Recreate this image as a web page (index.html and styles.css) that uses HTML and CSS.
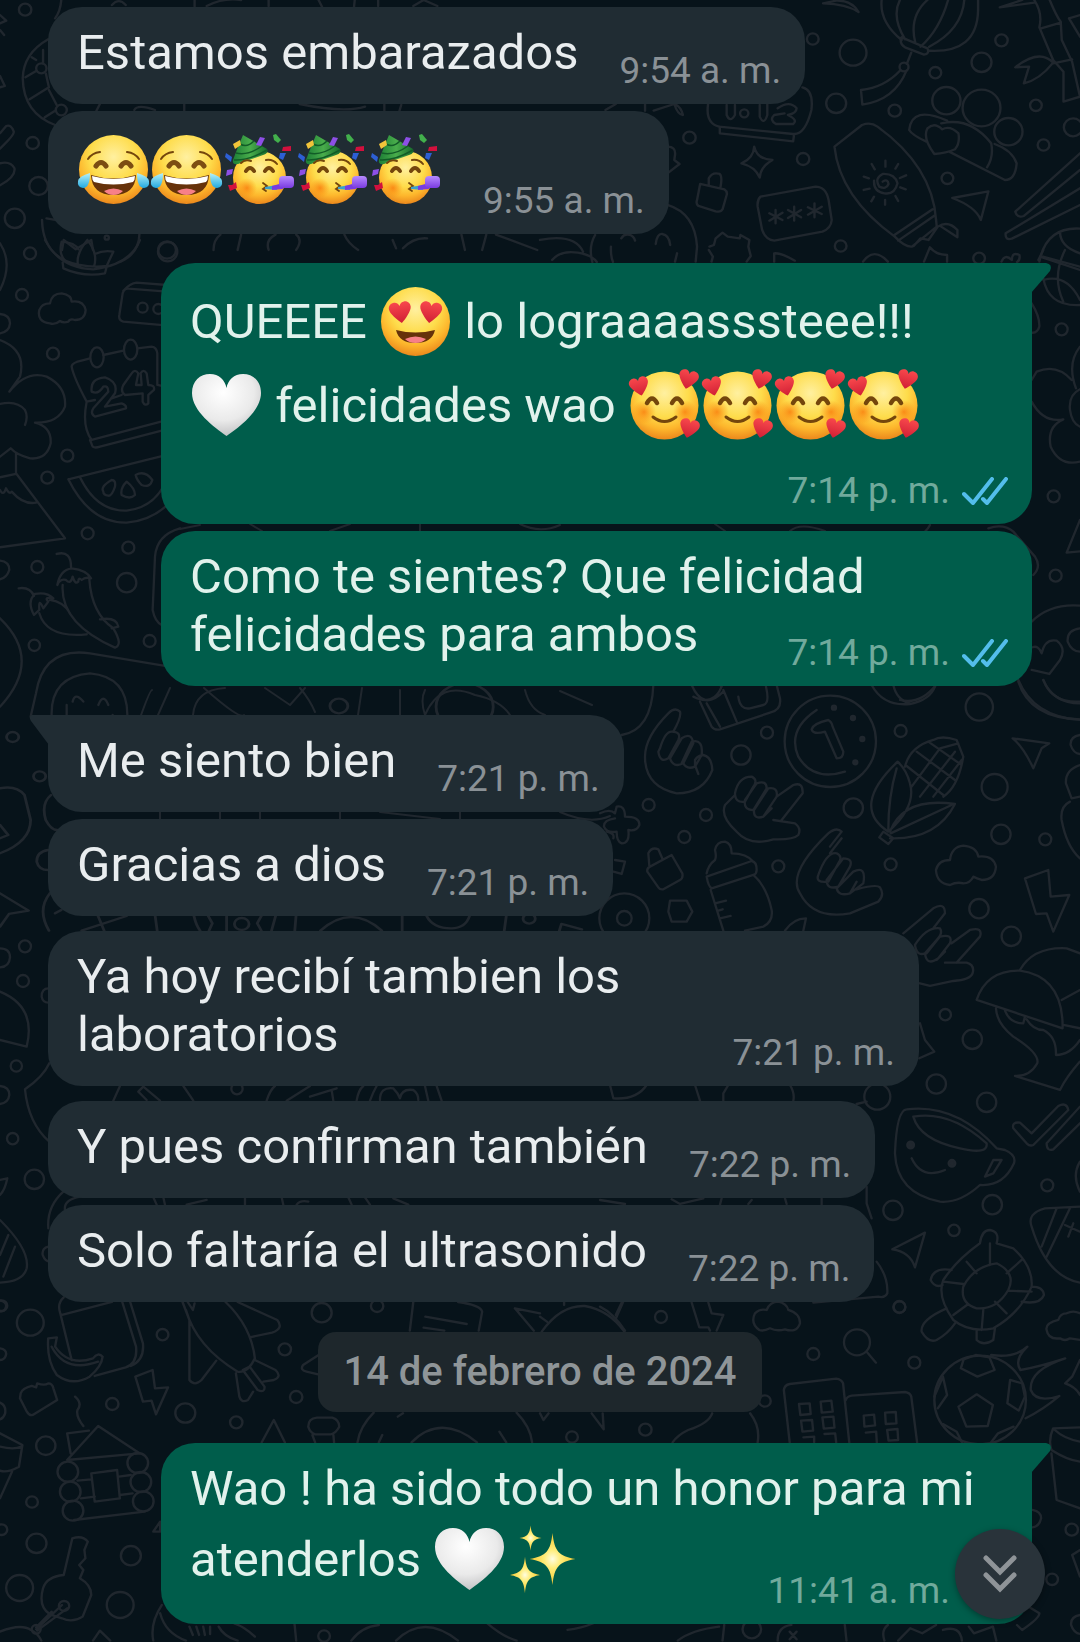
FILE: index.html
```html
<!DOCTYPE html>
<html lang="es">
<head>
<meta charset="utf-8">
<meta name="viewport" content="width=device-width, initial-scale=1">
<title>Chat</title>
<link rel="stylesheet" href="styles.css">
</head>
<body>
<svg class="defs" width="0" height="0" aria-hidden="true">
  <defs>
    <radialGradient id="face" cx=".5" cy=".32" r=".7">
      <stop offset="0" stop-color="#fff0a0"/><stop offset=".5" stop-color="#fedc4b"/><stop offset=".75" stop-color="#fdb62c"/><stop offset="1" stop-color="#e9821a"/>
    </radialGradient>
    <radialGradient id="blush"><stop offset="0" stop-color="#f9760a" stop-opacity=".75"/><stop offset="1" stop-color="#f98a10" stop-opacity="0"/></radialGradient>
    <radialGradient id="pearl" cx=".45" cy=".3" r=".75"><stop offset="0" stop-color="#fff"/><stop offset=".6" stop-color="#eaeaea"/><stop offset="1" stop-color="#bcbcbe"/></radialGradient>
    <linearGradient id="drop" x1="0" y1="0" x2="0" y2="1"><stop offset="0" stop-color="#b8f2f8"/><stop offset="1" stop-color="#22a9e0"/></linearGradient>
    <linearGradient id="hat" x1="0" y1="0" x2="1" y2="0"><stop offset="0" stop-color="#1d7f36"/><stop offset=".5" stop-color="#49ad4b"/><stop offset="1" stop-color="#176b2c"/></linearGradient>
    <linearGradient id="horn" x1="0" y1="0" x2="0" y2="1"><stop offset="0" stop-color="#b78bff"/><stop offset="1" stop-color="#7a3be0"/></linearGradient>
    <radialGradient id="gold"><stop offset="0" stop-color="#fffde0"/><stop offset=".35" stop-color="#ffed7a"/><stop offset="1" stop-color="#f5c62c"/></radialGradient>
    <linearGradient id="ruby" x1="0" y1="0" x2="0" y2="1"><stop offset="0" stop-color="#f8484c"/><stop offset="1" stop-color="#d01f35"/></linearGradient>
    <path id="heart" d="M0 10C-4 7-11-1-11-5C-11-9-8-11-5-11C-3-11-1-10 0-7C1-10 3-11 5-11C8-11 11-9 11-5C11-1 4 7 0 10Z" fill="url(#ruby)"/>
    <path id="star" d="M0-26C2-8 6-3 23 0C6 3 2 8 0 26C-2 8-6 3-23 0C-6-3-2-8 0-26Z" fill="url(#gold)"/>
    <symbol id="joy" viewBox="0 0 73 73">
      <circle cx="36.500" cy="36.500" r="34.500" fill="url(#face)"/>
      <g fill="none" stroke="#74460c" stroke-linecap="round">
        <path stroke-width="2" d="M11 26Q15 20 23 19M62 26Q58 20 50 19"/>
        <path stroke-width="5" stroke="#7c4d12" d="M19 33Q24 26 29 33M44 33Q49 26 54 33"/>
      </g>
      <path d="M14 42Q36.500 49 59 42Q58 62 36.500 62Q15 62 14 42Z" fill="#66320a"/>
      <path d="M15 43Q36.500 49 58 43Q58 47 56 49Q36.500 54 17 49Q15 47 15 43Z" fill="#fff"/>
      <path d="M27 58Q36.500 53 46 58Q42 62 36.500 62Q31 62 27 58Z" fill="#f78088"/>
      <path d="M13 40Q13 55 6 55Q0 54 1 48Q2 43 13 40Z" fill="url(#drop)"/>
      <path d="M60 40Q60 55 67 55Q73 54 72 48Q71 43 60 40Z" fill="url(#drop)"/>
    </symbol>
    <symbol id="party" viewBox="0 0 73 73">
      <circle cx="36.500" cy="44.500" r="26.500" fill="url(#face)"/>
      <circle cx="24" cy="55" r="10" fill="url(#blush)"/>
      <path d="M20 2L44 16Q46 20 40 22L15 31Q9 32 10 27Q14 16 20 2Z" fill="url(#hat)"/>
      <path d="M17 11Q24 15 31 8M13 20Q25 23 39 13M11 27Q25 28 44 17" fill="none" stroke="#125c27" stroke-width="1.500"/>
      <g fill="none" stroke="#74460c" stroke-linecap="round">
        <path stroke-width="2" d="M18 30Q22 26 28 28M43 27Q50 26 54 31"/>
        <path stroke-width="4" d="M23 38Q27 32 31 38M42 38Q46 32 50 38"/>
        <path stroke-width="1.800" d="M40 50L44 53L40 56L43 58"/>
      </g>
      <path d="M42 54L54 52L54 57L42 56Z" fill="#3aa1cf"/>
      <path d="M49 53L60 50V56L49 57Z" fill="#7a3be0"/>
      <rect x="56" y="43" width="15" height="12" rx="4" fill="url(#horn)"/>
      <path d="M37 4l5 1-4 8-5-1z" fill="#8d4fe6"/><path d="M50 2l3-1 5 6-3 3-4-3z" fill="#42b04c"/>
      <path d="M60 14l8-1 0 5-9 0z" fill="#d2103d"/><path d="M57 20l6 0-3 7-4-2z" fill="#2d5fd4"/>
      <path d="M3 20l6 4-1 5-6-5z" fill="#2d5fd4"/><path d="M10 11l7-4 1 5-6 4z" fill="#f2c43a"/>
      <path d="M4 37l6-1-1 5-6 2z" fill="#8d4fe6"/><path d="M5 52l4 0 4-3 1 6-7 3z" fill="#d2103d"/>
    </symbol>
    <symbol id="love-eyes" viewBox="0 0 73 73">
      <circle cx="36.500" cy="36.500" r="34.500" fill="url(#face)"/>
      <use href="#heart" transform="translate(21.500 28) rotate(-8)"/>
      <use href="#heart" transform="translate(51.500 28) rotate(8)"/>
      <path d="M17 45Q36.500 50 56 45Q53 58 36.500 58Q20 58 17 45Z" fill="#66320a"/>
      <path d="M26 54Q36.500 49 47 54Q43 58 36.500 58Q30 58 26 54Z" fill="#f78088"/>
    </symbol>
    <symbol id="adore" viewBox="0 0 73 73">
      <circle cx="36.500" cy="36.500" r="34" fill="url(#face)"/>
      <circle cx="16" cy="43" r="12" fill="url(#blush)"/><circle cx="57" cy="43" r="12" fill="url(#blush)"/>
      <g fill="none" stroke="#74460c" stroke-linecap="round">
        <path stroke-width="4.500" d="M19 34Q24 25 29 34M44 34Q49 25 54 34"/>
        <path stroke-width="3" d="M25 48Q36.500 57 48 48"/>
      </g>
      <use href="#heart" transform="translate(11.500 18) rotate(-14) scale(.88)"/>
      <use href="#heart" transform="translate(60 11) rotate(14) scale(.9)"/>
      <use href="#heart" transform="translate(61 60) rotate(14) scale(.9)"/>
    </symbol>
    <symbol id="white-heart" viewBox="0 0 73 73">
      <path d="M36.500 67C24 58 2 42 2 24C2 12 10 5 20 5C29 5 35 11 36.500 19C38 11 44 5 53 5C63 5 71 12 71 24C71 42 49 58 36.500 67Z" fill="url(#pearl)"/>
    </symbol>
    <symbol id="sparkles" viewBox="0 0 73 73">
      <use href="#star" transform="translate(46.500 36)"/>
      <use href="#star" transform="translate(24.500 15) scale(.48)"/>
      <use href="#star" transform="translate(19 52) scale(.65 .7)"/>
    </symbol>
    <symbol id="read" viewBox="0 0 46 28">
      <path d="M2 17L11 26L30 2M21 22L25 26L44 2" fill="none" stroke="#53bdeb" stroke-width="4" stroke-linecap="round" stroke-linejoin="round"/>
    </symbol>
  </defs>
</svg>

<main class="chat">
  <svg class="wallpaper" viewBox="0 0 1080 1642" preserveAspectRatio="xMidYMin slice" aria-hidden="true">
    <!-- top left -->
    <g transform="scale(.3444 .3333)">
      <path d="M0 45L18 62L0 70M0 90L12 105M0 228L14 258L0 262M178 0Q175 35 160 55M140 118Q68 160 66 235Q68 340 160 375M125 150V190M106 212L74 232M133 220L142 262L86 298M142 270L165 316M160 332L130 352M105 180L92 172M0 400L18 378Q32 372 40 395Q42 405 0 446M0 490Q30 482 42 505Q46 530 0 556M565 0V20M600 18Q650 -8 700 0M780 0V18M325 15Q345 -8 365 15M925 0L935 20M1030 0L1028 20M1098 0V18M1200 18L1230 0L1270 18M390 330Q400 312 450 330M535 312V332M870 312Q1000 340 1060 320M1116 312V332M290 312L280 332M1165 315L1160 332"/>
      <path d="M122 660Q124 750 190 782M405 700Q405 760 350 785M135 655L160 660M180 750L185 720L220 748L265 720L270 750M620 750Q620 720 640 704M690 750L700 704M780 750Q770 720 800 704M860 750Q880 720 860 704M1000 704Q1010 730 1040 750M1140 720L1150 745M1170 745Q1200 712 1240 715M1340 704L1350 750M1400 750L1412 704M1440 704L1560 750"/>
      <circle cx="73" cy="29" r="18"/><circle cx="120" cy="205" r="15"/><circle cx="178" cy="330" r="16"/><circle cx="95" cy="429" r="18"/><circle cx="112" cy="558" r="27"/><circle cx="43" cy="655" r="29"/><circle cx="310" cy="713" r="6"/><circle cx="485" cy="750" r="26"/>
    </g>
    <!-- top right -->
    <g transform="translate(540 0) scale(.3444 .3333)">
      <path d="M1050 120Q985 65 992 0M1060 118Q1020 50 1045 0M1090 130Q1070 50 1125 0M1105 140Q1160 90 1185 0M1130 140Q1225 90 1232 0M1130 152Q1270 160 1272 30V0M1050 112L1125 145Q1132 162 1115 164L1060 142Q1042 130 1050 112ZM1078 158L1065 192M1045 212Q1000 262 932 270L936 314Q1030 300 1064 212M822 10L860 2Q905 0 925 36Q890 12 822 10M1335 22L1400 0M1335 22L1435 8M1435 0Q1460 40 1450 82L1490 180L1520 215V305L1568 290M1480 0Q1500 50 1512 65L1515 120L1545 185L1568 290M1455 85L1512 68M1490 190L1545 178M1490 188Q1450 145 1380 202L1420 200L1405 250Q1450 240 1490 188M1536 55L1568 45M1536 55L1568 110"/>
      <path d="M762 262Q795 270 788 330Q770 405 735 402L520 380Q480 370 488 312M522 380V400L735 424L738 402M542 315V345Q552 370 566 345V315M638 315V350Q650 378 660 345V312M690 325Q725 300 745 325Q745 340 720 345Q750 360 735 372H685Q665 360 680 345L710 340M330 332L390 312Q400 345 415 345Q410 322 392 312M190 330L220 312M305 312V332M370 440Q395 440 392 465L390 480L405 492L370 520M622 440Q630 478 675 480Q640 500 638 533Q625 500 585 490Q620 475 622 440ZM465 552L535 568Q545 575 542 585L530 628Q525 638 510 634L460 618Q452 612 456 600ZM490 555V535Q500 515 522 522Q530 530 524 562M640 590L800 560Q830 560 838 600L847 660Q845 685 820 695L680 722Q655 720 645 690L632 620Q630 600 640 590ZM684 630V670M666 640L704 660M704 638L666 662M738 620V662M720 630L758 652M758 630L720 654M797 610V652M778 622L818 642M818 620L778 644"/>
      <path d="M855 440L935 375Q960 365 980 380Q1140 500 1150 660L1152 680L1080 740Q1060 742 1030 710Q870 590 855 440ZM1028 706L1140 628M1040 722L1148 645M1085 738L1105 715L1128 720L1155 680M1155 680Q1185 660 1212 690L1212 712L1165 680M995 545Q1010 535 1012 552Q1005 570 985 560Q970 535 995 522Q1030 520 1038 550Q1030 585 1000 580Q968 575 970 542M1003 482V500M963 492L972 508M940 530L955 535M940 570L957 566M962 604L970 590M1002 600V614M1040 603L1032 588M1062 568L1046 562M1063 526L1045 534M1040 492L1032 506M1145 462Q1110 415 1125 385Q1145 365 1168 388Q1190 375 1215 400Q1220 430 1205 448Q1180 460 1145 462ZM1182 362Q1080 315 1072 390Q1080 405 1122 425M1165 370Q1250 350 1310 430Q1318 470 1298 502M1188 455L1350 540Q1380 540 1384 490Q1370 450 1320 432M1568 460L1380 635Q1385 655 1405 648L1568 510M1568 565L1352 700Q1350 722 1370 716L1568 615M1197 594L1302 574L1280 660Q1265 620 1197 594ZM370 615Q450 640 456 740L452 785M152 786Q140 740 160 705M206 740Q205 770 212 786M236 715Q245 700 260 705Q272 708 276 722M336 732Q340 700 355 702Q375 705 378 735M398 760L392 785M0 720Q100 700 125 755M35 780Q60 750 110 758Q150 765 165 786M492 740L505 735L510 715L530 698L545 710L580 715L582 705L608 720L605 740L612 768L600 785M490 750L502 770L498 785M680 785V760Q700 758 740 782M938 785Q970 740 1010 785M1115 785L1132 742Q1150 765 1182 765V785M1340 785Q1350 760 1370 780Q1370 755 1392 765Q1395 780 1385 786M1450 785Q1470 680 1568 686M1510 696Q1510 740 1568 760M1460 770L1568 800"/>
      <circle cx="792" cy="117" r="17"/><circle cx="909" cy="158" r="39"/><circle cx="1340" cy="121" r="18"/><circle cx="1282" cy="187" r="29"/><circle cx="1148" cy="218" r="17"/><circle cx="860" cy="310" r="29"/><circle cx="1030" cy="332" r="18"/><circle cx="1440" cy="316" r="17"/><circle cx="434" cy="413" r="18"/><circle cx="764" cy="477" r="18"/><circle cx="1462" cy="435" r="17"/><circle cx="1548" cy="382" r="27"/><circle cx="1183" cy="535" r="17"/><circle cx="873" cy="738" r="17"/><circle cx="1057" cy="201" r="13"/><circle cx="1275" cy="775" r="17"/><circle cx="593" cy="340" r="12"/><circle cx="1180" cy="302" r="41"/><circle cx="1282" cy="324" r="55"/><circle cx="1360" cy="395" r="41"/>
    </g>
    <!-- left, beside the outgoing messages -->
    <g transform="translate(0 240) scale(.3333)">
      <path d="M135 0Q180 85 280 88Q390 75 420 0M185 5Q225 8 235 28M185 5Q175 40 195 62M195 62Q250 85 320 78L340 35Q310 30 285 42M262 0Q225 45 235 78M262 0Q295 40 282 80M188 68L190 85Q250 112 315 100L320 80M0 10Q40 70 0 150M0 222Q30 225 30 250Q28 275 0 280M150 250Q110 245 118 210Q125 190 150 190Q155 160 185 160Q215 165 215 185Q250 180 257 210Q255 240 225 240Q210 235 205 245Q190 250 180 243Q165 255 150 250ZM540 260L370 245Q355 240 358 225L368 160Q372 145 385 146L540 158M370 152Q390 130 410 128L540 138M0 300Q80 330 60 410L28 455Q80 390 140 410Q200 440 195 500Q175 550 105 548Q155 560 152 610Q140 660 90 655Q50 645 32 625L0 650M0 492Q50 480 75 510Q85 530 75 555M48 640V700L195 895L0 922M0 712L48 702M0 750Q10 770 18 745Q28 765 35 755Q70 795 108 788M215 380Q215 372 230 366L270 355M310 345L370 332M412 325L455 320Q470 322 472 340V435L540 450M215 380Q220 410 260 485M260 485L285 480M335 475L365 465M260 485Q245 560 275 600L540 530M270 600L278 620Q285 625 300 620L540 558M275 455Q270 415 315 412Q355 425 345 460L315 500L365 490Q380 495 378 505L285 530Q270 520 280 505L325 455Q325 435 310 440Q295 465 275 455ZM395 400Q405 385 415 400L408 435H425L422 400Q430 385 440 400L445 435Q465 435 462 450L445 465V490Q435 500 428 485V460L375 465Q360 455 370 435ZM205 718L540 635M205 718Q270 850 380 848Q480 840 540 750M240 712Q290 815 380 812Q480 800 510 690M310 755Q300 740 335 720Q348 720 345 740Q335 770 325 767Q310 765 310 755ZM380 725Q360 745 365 765Q390 780 405 765Q405 745 380 725ZM407 705Q435 690 457 720Q450 745 425 735Q410 720 407 705ZM170 942Q215 930 213 985M172 1035Q180 990 215 985Q260 990 273 1015Q255 1010 245 1020Q235 1010 235 1025Q225 1035 218 1010Q212 1035 198 1020Q180 1015 172 1035ZM188 1035Q180 1150 345 1223Q370 1215 340 1165Q275 1120 268 1018M56 1045Q90 1040 102 1068M102 1125Q80 1085 105 1062Q140 1055 160 1075Q130 1070 145 1085L130 1105Q115 1070 118 1110ZM118 1120Q140 1195 260 1183M150 1080Q190 1085 210 1120M300 1138Q350 1130 355 1160L335 1165M0 962Q28 965 28 990Q20 1015 0 1018M0 1135Q130 1260 0 1400M540 865Q470 885 465 950L458 1110Q465 1145 485 1155M540 1285L270 1240Q130 1220 108 1360L92 1430M155 1430Q150 1310 270 1300Q385 1310 382 1430M218 1385Q225 1355 250 1385M295 1395Q310 1358 325 1395M200 1395V1430M338 1425V1430"/>
      <circle cx="90" cy="40" r="18"/><circle cx="503" cy="35" r="29"/><circle cx="66" cy="165" r="18"/><circle cx="159" cy="341" r="18"/><circle cx="428" cy="203" r="15"/><circle cx="475" cy="207" r="15"/><circle cx="202" cy="647" r="18"/><circle cx="142" cy="713" r="18"/><circle cx="263" cy="880" r="18"/><circle cx="385" cy="923" r="18"/><circle cx="112" cy="981" r="18"/><circle cx="380" cy="1028" r="29"/><circle cx="103" cy="1216" r="17"/><circle cx="449" cy="1203" r="18"/><ellipse cx="291" cy="352" rx="20" ry="30"/><ellipse cx="392" cy="329" rx="20" ry="30"/>
    </g>
    <!-- right, beside the outgoing messages -->
    <g transform="translate(900 250) scale(.3333)">
      <path d="M415 30L430 0M420 20L540 60M495 0Q455 80 490 155M430 85Q445 170 540 165M430 90Q500 70 540 150M395 160Q420 200 418 230Q412 250 395 248M540 290Q500 340 528 415M515 390Q470 340 410 365L395 390M395 455Q430 520 490 508Q440 530 452 590Q480 650 540 635M540 418Q505 435 510 480Q515 520 540 530M540 810L500 908L540 904M265 835Q310 820 340 845L405 920Q425 950 400 975M395 1115Q450 1060 540 1067M540 1135Q500 1140 503 1175Q515 1205 540 1205M398 1192Q415 1185 425 1210Q435 1165 470 1172Q500 1195 480 1230L448 1272L395 1260M355 1290Q400 1400 540 1410M430 1290Q455 1360 540 1355M0 1350Q60 1365 108 1305M90 825Q85 835 75 845"/>
      <circle cx="485" cy="238" r="18"/><circle cx="461" cy="739" r="18"/><circle cx="467" cy="977" r="18"/>
    </g>
    <!-- strips between the outgoing messages -->
    <path d="M180 529L200 525M250 524L262 531M330 531L350 524M420 524V531M520 524Q540 534 560 525M715 524L725 531M790 531Q800 522 825 531M170 688L158 715M225 688Q195 690 193 715M265 688L290 705L305 688M300 688Q310 700 315 712M362 688L358 715M400 690V715M425 690Q420 700 425 715M425 715Q440 680 475 695Q500 700 510 715M525 690Q530 710 545 715M560 691L592 705M204 688Q240 720 244 715M140 718Q150 690 152 690M160 812V819M220 812V819M260 812V819M340 812V819M380 812L440 819M460 812V819M560 812Q590 825 610 816"/>
    <!-- right, beside the first replies -->
    <g transform="translate(600 680) scale(.3333)">
      <path d="M160 15Q155 150 65 165M135 230Q135 170 205 100Q225 80 240 95Q245 110 220 155M135 230Q135 320 230 340Q310 340 337 270Q335 230 310 225Q295 225 285 240V255L295 282M180 205Q195 155 215 155Q245 155 235 180L205 235Q180 250 175 215ZM210 235L245 175Q275 155 280 190L250 250Q220 265 210 235ZM245 250L275 185Q310 175 305 225L285 260Q260 270 250 250M275 15Q310 95 370 35M280 50Q340 80 365 20L360 15M300 65L335 140Q345 152 360 148L510 98Q545 90 540 55L530 15M320 70L360 140M370 30L410 125M415 50Q420 90 450 85L490 75Q510 70 498 20M635 148Q640 130 685 120Q695 125 698 140L730 215Q730 235 710 235L675 155Q640 165 635 148ZM650 90Q560 150 595 230Q640 305 735 275M815 15Q850 80 930 72Q990 60 1005 20M880 15Q890 60 930 70M1255 5Q1290 115 1440 118M1330 0Q1360 70 1440 70M1238 175L1348 190L1325 205L1300 265Q1270 200 1238 175ZM1440 165Q1410 170 1412 195Q1420 220 1440 222M405 340Q415 290 455 290Q475 300 460 320L435 365Q405 370 405 340ZM435 360L470 310Q500 300 500 325L460 390Q430 390 435 360ZM462 390L505 325Q535 320 530 350L490 410Q460 420 462 390M490 410L515 385M530 350L580 315Q610 305 608 340L545 420M520 420L585 430Q605 445 595 465Q580 480 520 478Q450 500 410 455Q360 410 375 375L405 345M1440 255Q1395 270 1398 310L1415 355L1440 350M1410 365Q1380 380 1385 420Q1400 500 1440 535M893 245Q750 380 865 455Q950 380 930 310Q920 270 893 245ZM890 265Q865 350 865 450M870 455Q910 350 1065 372Q1010 480 870 475M872 460L1055 375M850 455L880 475L865 492L838 472ZM915 260Q930 200 1000 180Q1025 165 1070 180L1090 230Q1075 320 1030 350M920 258L1030 345M950 215L1065 300M985 185L1085 255M935 320L1020 205L1075 190M960 350L1065 215M1000 350L1085 240M0 400Q30 385 45 400L50 380Q75 375 75 410Q120 410 118 435Q110 455 85 450Q90 490 65 490Q50 485 50 455Q20 460 12 440Q10 420 45 415M20 455Q45 460 40 475M45 540L75 545L65 582L40 575M150 560L215 525L247 580Q250 595 240 600L190 628Q180 630 175 622L142 575Q140 565 150 560ZM148 558L145 520Q155 500 175 508L188 538M210 662H260L277 695L260 725H215L205 695ZM345 540Q350 530 345 510Q350 485 375 485Q395 490 395 520Q440 520 460 545M345 540Q325 555 320 580M320 590L455 543Q470 545 470 570Q470 582 460 585L335 625Q325 620 320 590ZM332 630L370 752M460 585Q500 620 515 690Q520 725 490 740L435 752M345 670L378 662M355 692L368 688M360 715L392 708M690 500L725 455Q710 440 685 460Q560 580 600 640Q640 720 750 700L835 665Q855 645 840 622Q830 612 770 628M655 585Q680 515 710 520Q730 530 715 550L685 605Q645 610 655 585ZM680 600L730 535Q760 535 750 560L715 620Q680 630 680 600ZM710 625L760 575Q800 555 790 610L750 640Q715 650 710 625M750 640L770 605M690 520L725 475M1050 615Q1010 610 1008 570Q1015 540 1050 540Q1055 500 1090 497Q1130 500 1135 530Q1180 525 1188 560Q1185 600 1145 600Q1130 595 1120 590Q1110 610 1090 610Q1070 605 1050 615ZM1275 595L1345 570L1352 650L1408 645L1360 755L1340 700L1308 702ZM555 752Q580 715 618 715L610 752M910 760L1000 685Q1035 665 1035 700L1000 745M945 795Q980 740 1020 745Q1030 760 1010 780L975 820Q950 830 945 795ZM980 820L1020 770Q1060 760 1050 790L1015 835Q980 860 975 820M1010 840L1035 815M1055 790L1110 750Q1150 740 1140 770L1070 848M1035 848H1100Q1125 855 1118 880Q1110 900 1060 903L990 918L960 910M1260 870Q1300 800 1400 805L1440 820M1130 960Q1160 870 1260 872Q1390 890 1388 1045ZM1385 960L1440 930M1390 1035L1440 1045M1188 985Q1190 1030 1240 1070Q1320 1120 1312 1150Q1290 1190 1245 1188L1380 1230Q1400 1190 1440 1145M1215 992Q1230 1030 1270 1030L1275 1010M1280 1018Q1300 1050 1330 1050Q1370 1070 1368 1125Q1410 1125 1440 1080M960 1030L975 1080L1003 1115L958 1135"/>
      <circle cx="691" cy="184" r="137"/><circle cx="1138" cy="81" r="41"/><circle cx="501" cy="158" r="18"/><circle cx="902" cy="153" r="18"/><circle cx="423" cy="225" r="29"/><circle cx="1184" cy="321" r="39"/><circle cx="146" cy="375" r="18"/><circle cx="318" cy="405" r="18"/><circle cx="760" cy="384" r="29"/><circle cx="253" cy="471" r="18"/><circle cx="1203" cy="463" r="29"/><circle cx="1336" cy="478" r="18"/><circle cx="535" cy="559" r="18"/><circle cx="872" cy="553" r="18"/><circle cx="73" cy="715" r="75"/><circle cx="73" cy="715" r="22"/><circle cx="1137" cy="686" r="29"/><circle cx="1234" cy="769" r="29"/><circle cx="1036" cy="1004" r="17"/><circle cx="1117" cy="1078" r="29"/><circle cx="1009" cy="1212" r="29"/>
      <g class="dot"><circle cx="702" cy="83" r="6"/><circle cx="759" cy="114" r="6"/><circle cx="787" cy="177" r="6"/><circle cx="766" cy="247" r="6"/></g>
    </g>
    <!-- left, beside the first replies -->
    <g transform="translate(0 680) scale(.4083 .3333)">
      <path d="M0 325Q40 315 60 345L75 420Q75 485 0 520M0 435L20 465L0 475M0 640L70 692L22 702L0 740M125 345Q100 370 112 420Q125 450 140 450M118 510Q90 515 90 545Q95 570 118 570M122 640Q90 690 120 752M135 700L150 690M200 752L310 708M240 708L255 752M380 708L385 752M475 708Q480 735 490 752M510 708L520 730L512 752M555 708V752M640 708L630 730L640 752M675 708L665 752M725 708L722 752M785 752Q860 670 935 752M985 708V752M1045 708Q1060 745 1105 745Q1140 745 1150 708M1240 708L1235 752M1370 752L1375 732L1425 748"/>
      <circle cx="31" cy="171" r="15"/><circle cx="97" cy="289" r="15"/><circle cx="830" cy="78" r="22"/><circle cx="1138" cy="80" r="70"/><circle cx="1296" cy="716" r="15"/><circle cx="592" cy="732" r="18"/>
    </g>
    <g transform="translate(0 880) scale(.3333)">
      <path d="M0 205Q30 205 30 232Q28 260 0 262M0 335Q110 380 80 500L0 480M145 325Q125 325 125 350Q128 368 145 368M148 550Q130 590 75 628Q85 730 148 785M0 618Q28 620 28 645Q25 670 0 672M0 900L22 895Q15 930 0 945M0 1020Q90 1110 80 1165Q70 1205 0 1208M0 1125L25 1065M10 1190L45 1100M145 1100Q125 1105 128 1125Q135 1145 150 1145M190 935Q140 980 145 1045M240 950Q190 960 195 990M340 662L360 618M415 635L430 620L480 662M415 635L440 660M550 618L580 662M800 662Q810 630 825 618M860 662L930 618M930 650L1010 625M995 630L1000 662M1070 662Q1075 630 1090 618M1110 662Q1120 635 1130 618M1140 660Q1140 620 1180 625Q1195 640 1200 655Q1205 625 1240 630Q1255 640 1255 660M1285 662L1275 618M1325 662L1310 618M460 952L470 974M490 952L495 974M560 974L620 960M735 952V974M845 952L850 974M890 974Q900 960 925 965M1045 952L1055 974M1095 952L1110 974M1180 955L1225 974M0 1262Q20 1265 18 1280Q15 1295 0 1295"/>
      <circle cx="75" cy="199" r="18"/><circle cx="69" cy="303" r="18"/><circle cx="49" cy="558" r="17"/><circle cx="38" cy="776" r="17"/><circle cx="103" cy="898" r="29"/><circle cx="711" cy="626" r="17"/>
    </g>
    <!-- right, beside the last replies -->
    <g transform="translate(600 1080) scale(.3333)">
      <path d="M30 15L40 55Q110 60 140 15M285 15L300 62M370 62V40L385 15M570 15Q585 40 580 62M770 72L800 65M800 320V370L815 415M0 360L75 372M215 358L240 372L310 355M365 355L360 374M445 372L455 360M555 355L560 372M665 355V374M830 545Q865 590 862 640Q855 655 835 650L640 668M920 88Q1070 70 1190 205L1215 210Q1250 225 1242 250Q1210 320 1140 315Q1080 370 1020 365Q890 340 885 220Q890 90 920 88ZM940 110Q1050 90 1160 190Q1165 225 1080 205Q960 180 940 110ZM1180 240H1205L1180 280L1155 290ZM935 235Q965 300 1035 270M1240 145Q1235 125 1260 128L1295 160L1375 78Q1400 65 1405 90L1300 195Q1290 200 1280 190ZM1440 80L1340 190Q1340 215 1360 208L1440 130M1440 380L1335 385Q1280 400 1295 440Q1340 590 1440 608M1325 500L1370 385M1340 530L1410 385M1395 435L1440 455M1405 470L1420 430M1440 245Q1415 285 1440 335M877 508L975 458L945 562Q930 515 877 508ZM1140 490Q1145 450 1170 450Q1200 455 1190 490L1240 505Q1300 560 1295 620Q1260 700 1180 745Q1110 760 1060 720Q1010 650 1030 600Q1070 540 1140 490ZM1190 550Q1250 580 1225 630Q1190 690 1130 685Q1080 670 1090 620Q1120 560 1190 550ZM1170 490V555M1100 545L1130 580M1265 540L1220 580M1030 605L1090 612M1225 632L1295 635M1060 705L1105 672M1150 690L1145 750M1185 665L1220 700M1055 570Q1000 560 992 600Q1005 625 1028 615M1295 620Q1330 620 1332 645Q1320 675 1265 665M1130 750V780Q1150 800 1180 780L1185 745M1040 685Q960 720 965 755Q985 790 1010 780Q1045 760 1065 730M1440 700Q1420 690 1400 700Q1380 700 1375 720Q1335 730 1340 750Q1345 780 1380 775Q1395 785 1410 775L1440 780M478 750Q450 730 465 700Q480 685 500 690Q510 665 535 665Q560 670 565 690Q600 700 600 730Q590 760 555 748Q530 755 510 745Q490 755 478 750ZM800 815L828 848M275 668L298 742H325L330 752M325 668L335 700L370 705L350 752M0 680Q40 700 75 752M48 715L70 665"/>
      <circle cx="832" cy="50" r="39"/><circle cx="1160" cy="67" r="29"/><circle cx="1342" cy="316" r="18"/><circle cx="879" cy="391" r="29"/><circle cx="1177" cy="374" r="29"/><circle cx="1062" cy="451" r="17"/><circle cx="183" cy="711" r="18"/><circle cx="898" cy="681" r="18"/><circle cx="771" cy="787" r="39"/><circle cx="640" cy="822" r="18"/><circle cx="943" cy="848" r="18"/>
      <g class="dot"><circle cx="932" cy="195" r="10"/><circle cx="1056" cy="250" r="10"/></g>
    </g>
    <!-- bottom left -->
    <g transform="translate(0 1280) scale(.3444 .3333)">
      <path d="M185 52Q165 70 175 100L208 240M180 105L325 66M355 66L395 200Q400 250 365 262L275 288M378 66L415 190Q420 240 380 258M140 175L165 172L160 200Q200 260 270 235Q285 215 298 230Q295 260 260 290Q210 320 165 285Q135 240 140 175ZM150 200Q190 280 285 245M530 66L550 120V300Q565 320 585 300L628 242M540 90Q570 200 690 275Q720 280 740 235Q730 140 655 66M545 66L560 90L565 70M690 66L805 120Q825 145 790 158L725 172M685 280L695 350Q700 370 720 360L735 335M740 240L800 270Q820 290 795 300L765 305M705 270L748 330Q770 340 768 320L725 260ZM0 205Q18 208 18 222Q15 240 0 240M0 368Q18 375 15 400Q10 415 0 418M60 340Q65 325 92 318L105 322L108 310Q130 318 140 310Q152 310 155 325L166 360L95 405Q85 408 78 395L58 355ZM218 350Q240 370 225 390Q220 410 242 438M393 290L443 270L450 325L488 322L453 403L440 362L415 365ZM195 540L285 438L405 520ZM205 520L195 460L258 452M265 580L340 570L348 655L275 665ZM225 602L265 598M235 655L275 650M345 590L380 585M348 645L385 640M215 720L420 695M0 460L65 495L55 560Q20 580 0 572M0 500Q40 510 62 500M35 575L0 655M760 487L795 420L827 487M895 440Q895 415 920 413H965Q985 420 985 440Q975 460 960 463H915Q900 458 895 440ZM907 465L915 487M968 465L970 487M925 225L880 255Q870 270 890 275L930 285M1200 66L1190 152M1235 110L1355 132M1230 143L1290 152M1330 66Q1395 75 1400 95L1390 152M1495 85L1568 100M1495 85L1550 152M1085 398Q1045 440 1038 487M1110 465L1100 487M1195 487Q1280 400 1385 487M1155 410L1170 400M1500 398Q1540 440 1545 487M1450 455L1470 487M445 755L465 725V755ZM210 775Q240 765 255 785L245 810L248 835L230 855L242 870L232 895Q265 915 265 945L240 1010Q210 1030 180 1015L145 1003Q110 980 125 925Q135 890 185 885ZM180 975L105 1048M150 995L105 1042M195 985L108 1052M0 1055Q60 1030 90 1050Q110 1060 120 1082M270 1082L290 1052L320 1082M470 975Q435 1030 445 1082M465 1000Q480 1060 540 1082M550 1040L560 1065M570 1040L578 1065M590 1040L595 1065M610 1040V1062M635 1040Q650 1070 690 1082M680 1030Q710 1040 740 1070M855 1030L860 1082M1020 1082Q1050 1040 1100 1035M1150 1082Q1230 1000 1330 1082M1415 1030Q1460 1070 1500 1082"/>
      <circle cx="88" cy="128" r="39"/><circle cx="5" cy="77" r="16"/><circle cx="472" cy="164" r="17"/><circle cx="827" cy="208" r="18"/><circle cx="934" cy="98" r="29"/><circle cx="1095" cy="78" r="18"/><circle cx="326" cy="372" r="18"/><circle cx="538" cy="399" r="29"/><circle cx="686" cy="427" r="18"/><circle cx="860" cy="351" r="18"/><circle cx="133" cy="497" r="28"/><circle cx="93" cy="666" r="17"/><circle cx="106" cy="790" r="29"/><circle cx="380" cy="827" r="29"/><circle cx="57" cy="924" r="39"/><circle cx="349" cy="975" r="39"/><circle cx="5" cy="749" r="16"/><circle cx="186" cy="978" r="15"/><circle cx="105" cy="1048" r="13"/><circle cx="197" cy="575" r="30"/><circle cx="204" cy="635" r="30"/><circle cx="212" cy="692" r="30"/><circle cx="400" cy="549" r="30"/><circle cx="409" cy="606" r="30"/><circle cx="416" cy="664" r="30"/><circle cx="941" cy="1068" r="17"/>
    </g>
    <!-- bottom right -->
    <g transform="translate(540 1280) scale(.3444 .3333)">
      <path d="M0 110L20 125M5 155Q60 75 130 78Q200 90 245 155M70 66V75M220 105L238 66M725 487L708 330Q710 315 725 312L860 296Q875 298 880 310L898 487M888 360Q890 350 905 347L1060 336Q1075 338 1078 350L1095 487M752 372L783 370L786 402L756 405ZM815 365L846 362L850 395L818 398ZM758 422L790 420L793 452L762 455ZM820 412L852 410L855 443L824 446ZM765 472L796 470V487M826 462L857 460L860 487M940 407L970 404L973 436L942 440ZM1002 398L1033 396L1035 430L1004 432ZM946 458L976 455L978 487M1008 450L1038 447L1040 480L1012 482ZM1230 238L1265 225L1305 232L1320 270L1270 290L1222 265ZM1215 380L1268 343L1315 375L1300 438L1238 440ZM1145 350L1170 290L1182 345L1155 385M1365 300L1400 310L1408 350L1390 392L1357 370ZM1170 432L1210 455L1225 487M1310 487L1330 460L1375 440M1310 225Q1380 235 1415 200Q1375 240 1395 270Q1450 260 1525 235Q1420 270 1425 330Q1440 370 1508 348Q1460 390 1410 415M1568 240L1545 290L1525 310Q1555 320 1568 345M1568 442L1490 445Q1475 480 1485 510Q1530 540 1568 545M1495 450Q1520 475 1568 485M1485 520L1500 660L1568 685M1430 690Q1455 695 1455 715Q1450 740 1430 742M1568 810L1545 825L1568 890M0 400L10 420L25 400M150 400L185 448L182 400M500 400Q490 430 430 450Q400 465 385 487M610 400Q640 440 632 487M1415 978L1450 1000Q1450 1015 1400 1050L1385 1035M1568 1005Q1540 1010 1542 1035Q1550 1060 1568 1062M80 1050Q120 1045 155 1030M400 1082Q440 1050 520 1040M530 1082L535 1035M690 1082Q690 1040 730 1035M725 1055L745 1078M745 1055L725 1078M885 1035L890 1082M1000 1082Q990 1050 1010 1035M1040 1082L1075 1045L1110 1060L1150 1035M1170 1050Q1220 1035 1225 1082M1245 1040L1260 1060L1315 1040L1325 1082"/>
      <circle cx="1278" cy="360" r="133"/><circle cx="1044" cy="81" r="17"/><circle cx="653" cy="363" r="17"/><circle cx="306" cy="449" r="18"/><circle cx="93" cy="471" r="17"/><circle cx="1544" cy="749" r="18"/><circle cx="1487" cy="898" r="17"/><circle cx="615" cy="1048" r="27"/>
    </g>
  </svg>

  <ol class="messages">
    <li class="bubble in"><p class="text">Estamos embarazados</p><span class="meta"><time>9:54 a. m.</time></span></li>
    <li class="bubble in"><p class="text"><svg class="emoji" role="img" aria-label="risa"><use href="#joy"/></svg><svg class="emoji" role="img" aria-label="risa"><use href="#joy"/></svg><svg class="emoji" role="img" aria-label="fiesta"><use href="#party"/></svg><svg class="emoji" role="img" aria-label="fiesta"><use href="#party"/></svg><svg class="emoji" role="img" aria-label="fiesta"><use href="#party"/></svg></p><span class="meta"><time>9:55 a. m.</time></span></li>

    <li class="bubble out first stacked"><p class="text">QUEEEE <svg class="emoji" role="img" aria-label="enamorado"><use href="#love-eyes"/></svg> lo lograaaasssteee!!!<br><svg class="emoji" role="img" aria-label="corazón blanco"><use href="#white-heart"/></svg> felicidades wao <svg class="emoji" role="img" aria-label="cariño"><use href="#adore"/></svg><svg class="emoji" role="img" aria-label="cariño"><use href="#adore"/></svg><svg class="emoji" role="img" aria-label="cariño"><use href="#adore"/></svg><svg class="emoji" role="img" aria-label="cariño"><use href="#adore"/></svg></p><span class="meta"><time>7:14 p. m.</time><svg class="ticks" role="img" aria-label="leído"><use href="#read"/></svg></span></li>
    <li class="bubble out overlay"><p class="text">Como te sientes? Que felicidad<br>felicidades para ambos</p><span class="meta"><time>7:14 p. m.</time><svg class="ticks" role="img" aria-label="leído"><use href="#read"/></svg></span></li>

    <li class="bubble in first"><p class="text">Me siento bien</p><span class="meta"><time>7:21 p. m.</time></span></li>
    <li class="bubble in"><p class="text">Gracias a dios</p><span class="meta"><time>7:21 p. m.</time></span></li>
    <li class="bubble in loose wide"><p class="text">Ya hoy recibí tambien los laboratorios</p><span class="meta"><time>7:21 p. m.</time></span></li>
    <li class="bubble in loose"><p class="text">Y pues confirman también</p><span class="meta"><time>7:22 p. m.</time></span></li>
    <li class="bubble in"><p class="text">Solo faltaría el ultrasonido</p><span class="meta"><time>7:22 p. m.</time></span></li>

    <li class="date"><time datetime="2024-02-14">14 de febrero de 2024</time></li>

    <li class="bubble out first overlay"><p class="text">Wao ! ha sido todo un honor para mi<br>atenderlos <svg class="emoji" role="img" aria-label="corazón blanco"><use href="#white-heart"/></svg><svg class="emoji" role="img" aria-label="destellos"><use href="#sparkles"/></svg></p><span class="meta"><time>11:41 a. m.</time><svg class="ticks" role="img" aria-label="leído"><use href="#read"/></svg></span></li>
  </ol>

  <button class="scroll-down" type="button" aria-label="Ir al final">
    <svg width="34" height="38" viewBox="0 0 34 38" aria-hidden="true"><path d="M3 3L17 17L31 3M3 20L17 34L31 20" fill="none" stroke="#8f9498" stroke-width="5" stroke-linecap="round"/></svg>
  </button>
</main>
</body>
</html>
```

FILE: styles.css
```css
* {
  box-sizing: border-box;
}

body {
  margin: 0;
  background: #07131a;
  font-family: Roboto, "Liberation Sans", sans-serif;
}

.defs {
  position: absolute;
}

.chat {
  position: relative;
  min-height: 100vh;
  overflow: hidden;
}

.wallpaper {
  position: absolute;
  inset: 0;
  width: 100%;
  height: 100%;
  fill: none;
  stroke: #20272e;
  stroke-width: 7;
  stroke-linecap: round;
  stroke-linejoin: round;
}

.wallpaper > path {
  stroke-width: 2;
}

.dot {
  fill: #20272e;
}

.messages {
  position: relative;
  display: flex;
  flex-direction: column;
  margin: 0;
  padding: 7px 48px 18px;
  list-style: none;
}

.bubble {
  position: relative;
  display: flex;
  justify-content: space-between;
  max-width: calc(100% - 113px);
  margin-top: 7px;
  padding: 0 24px 0 29px;
  border-radius: 34px;
}

.bubble:first-child {
  margin-top: 0;
}

.bubble.in {
  align-self: flex-start;
  background: #202c33;
  color: #e9edef;
}

.bubble.out {
  align-self: flex-end;
  width: 100%;
  background: #005d4b;
  color: #e1f2ec;
}

.bubble.wide {
  width: 100%;
}

.bubble.loose {
  margin-top: 15px;
}

.bubble.first {
  margin-top: 29px;
}

.bubble.in.first {
  border-top-left-radius: 0;
}

.bubble.out.first {
  border-top-right-radius: 0;
}

.bubble.first::before {
  content: "";
  position: absolute;
  top: 0;
  width: 20px;
  height: 30px;
  background: inherit;
}

.bubble.in.first::before {
  right: 100%;
  margin-right: -1px;
  clip-path: path("M20 0H3Q-1 1 2 6L20 30Z");
}

.bubble.out.first::before {
  left: 100%;
  margin-left: -1px;
  clip-path: path("M0 0H15Q22 1 19 8L0 30Z");
}

.text {
  margin: 17px 0 22px;
  font-size: 49px;
  line-height: 58px;
}

.meta {
  display: flex;
  flex: none;
  align-self: flex-end;
  align-items: center;
  gap: 12px;
  margin: 0 0 12px 41px;
  color: #8a9196;
  font-size: 37px;
  line-height: 42px;
}

.out .meta {
  color: #71aa9c;
}

.bubble.stacked {
  flex-direction: column;
}

.bubble.overlay {
  display: grid;
  grid-template-columns: 1fr;
}

.overlay .text,
.overlay .meta {
  grid-area: 1 / 1;
}

.overlay .text {
  justify-self: start;
}

.overlay .meta {
  justify-self: end;
}

.emoji {
  width: 73px;
  height: 73px;
  margin: 5px 0 6px;
  vertical-align: -26px;
}

.ticks {
  width: 46px;
  height: 28px;
}

.date {
  align-self: center;
  margin: 30px 0 2px;
  padding: 18px 25px;
  border-radius: 18px;
  background: #1e272c;
  color: #8f9598;
  font-size: 40px;
  font-weight: 500;
  line-height: 44px;
}

.scroll-down {
  position: fixed;
  right: 35px;
  bottom: 23px;
  display: grid;
  place-items: center;
  width: 90px;
  height: 90px;
  padding: 0;
  border: 0;
  border-radius: 50%;
  background: #29333a;
  box-shadow: 0 2px 6px rgba(0, 0, 0, .35);
}
```
